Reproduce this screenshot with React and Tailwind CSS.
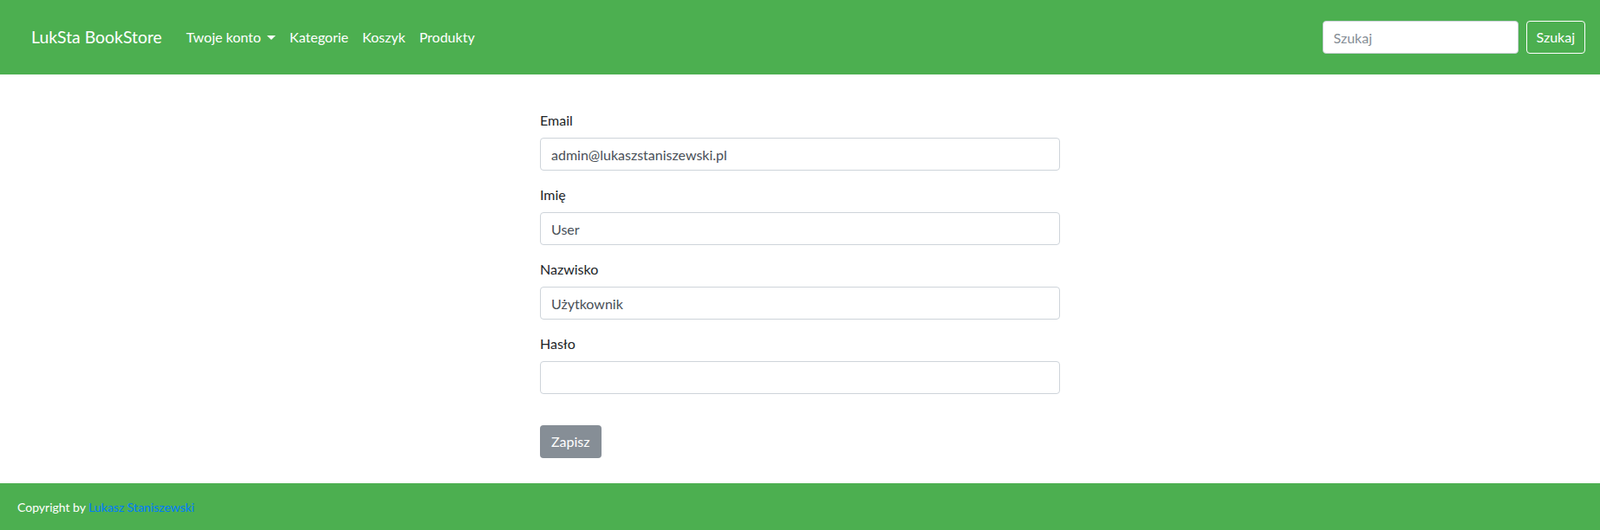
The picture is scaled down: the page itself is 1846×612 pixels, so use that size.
import React from "react";

const FONT = { fontFamily: "Lato, 'Noto Sans', 'Liberation Sans', sans-serif" };

const fields = [
  { label: "Email", value: "admin@lukaszstaniszewski.pl", type: "email" },
  { label: "Imię", value: "User", type: "text" },
  { label: "Nazwisko", value: "Użytkownik", type: "text" },
  { label: "Hasło", value: "", type: "password" },
];

function Navbar() {
  return (
    <nav className="flex h-[86px] items-center bg-[#4caf50] pl-[36px] pr-[17px] text-white">
      <a href="#" className="mr-[20px] text-[19.4px] leading-[30px]">
        LukSta BookStore
      </a>
      <ul className="flex items-center text-[16px] leading-6">
        <li>
          <a href="#" className="flex items-center px-2 py-2">
            Twoje konto
            <span className="ml-[7px] inline-block h-0 w-0 border-x-[5px] border-t-[5px] border-x-transparent border-t-white" />
          </a>
        </li>
        <li>
          <a href="#" className="block px-2 py-2">Kategorie</a>
        </li>
        <li>
          <a href="#" className="block px-2 py-2">Koszyk</a>
        </li>
        <li>
          <a href="#" className="block px-2 py-2">Produkty</a>
        </li>
      </ul>
      <form className="ml-auto flex items-center gap-[9px]">
        <input
          type="search"
          placeholder="Szukaj"
          className="h-[38px] w-[226px] rounded-[4px] border border-[#ced4da] bg-white px-3 text-[16px] text-[#495057] placeholder:text-[#868e96] outline-none"
        />
        <button
          type="button"
          className="h-[38px] rounded-[4px] border border-white px-[11px] text-[16px] text-white"
        >
          Szukaj
        </button>
      </form>
    </nav>
  );
}

export default function App() {
  return (
    <div className="flex min-h-screen flex-col bg-white" style={FONT}>
      <Navbar />

      <main className="flex justify-center pt-[41px]">
        <form className="w-[600px]">
          {fields.map((f) => (
            <div key={f.label} className="mb-4">
              <label className="mb-2 block text-[16px] leading-6 text-[#212529]">{f.label}</label>
              <input
                type={f.type}
                defaultValue={f.value}
                className="block h-[38px] w-full rounded-[4px] border border-[#ced4da] bg-white px-3 text-[16px] text-[#495057] outline-none"
              />
            </div>
          ))}
          <button
            type="button"
            className="mt-[20px] h-[38px] rounded-[4px] bg-[#868e96] px-[13px] text-[16px] text-white"
          >
            Zapisz
          </button>
        </form>
      </main>

      <footer className="mt-auto flex h-[54px] items-center bg-[#4caf50] px-[20px] text-[14px] text-white">
        Copyright by&nbsp;
        <a href="#" className="text-[#007bff]">Lukasz Staniszewski</a>
      </footer>
    </div>
  );
}
